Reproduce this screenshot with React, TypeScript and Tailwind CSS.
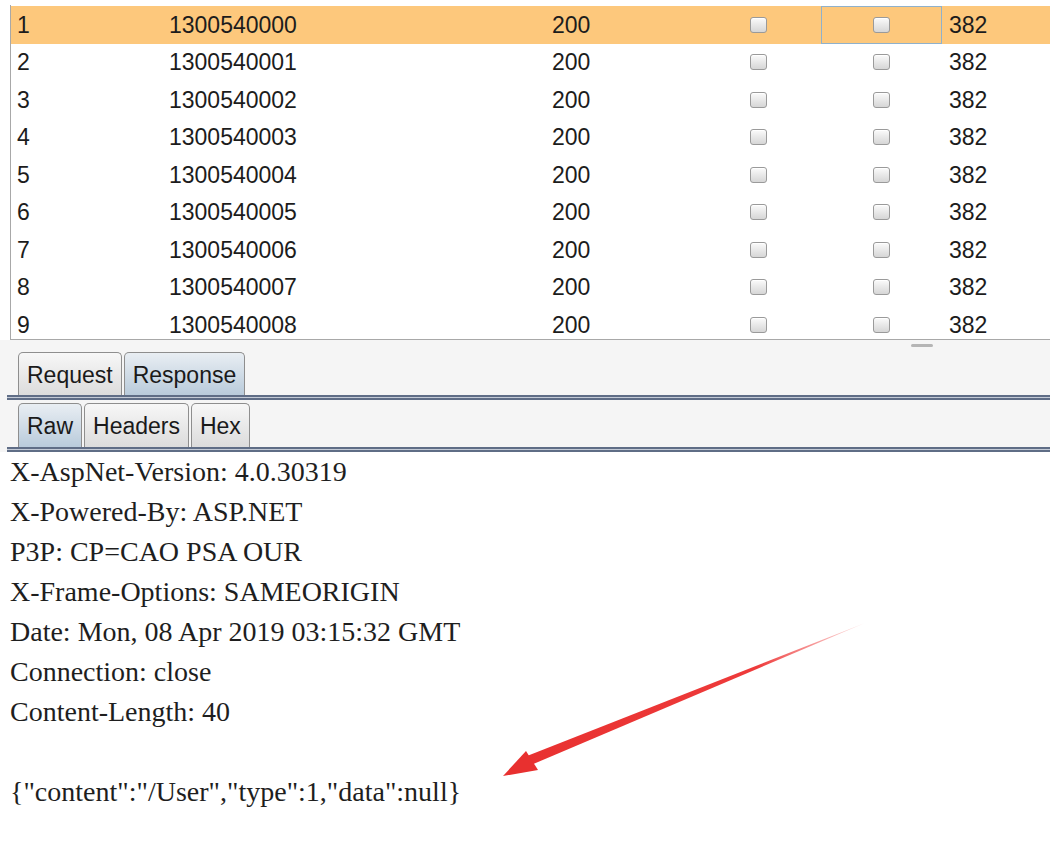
const rows = Array.from({ length: 9 }, (_, i) => ({
  n: i + 1,
  payload: String(1300540000 + i),
}));

const headers = [
  "X-AspNet-Version: 4.0.30319",
  "X-Powered-By: ASP.NET",
  "P3P: CP=CAO PSA OUR",
  "X-Frame-Options: SAMEORIGIN",
  "Date: Mon, 08 Apr 2019 03:15:32 GMT",
  "Connection: close",
  "Content-Length: 40",
];

function Box() {
  return (
    <span className="inline-block h-[16px] w-[17px] rounded-[3px] border border-[#9a9a9a] bg-gradient-to-b from-[#fbfbfb] to-[#d6d6d6] shadow-[inset_0_1px_0_#fff]" />
  );
}

function Tab({ label, active }: { label: string; active?: boolean }) {
  return (
    <div
      className={
        "flex h-full items-center rounded-t-[5px] border border-b-0 border-[#8e8e8e] px-[8px] pt-[2px] text-[23px] text-[#1a1a1a] " +
        (active
          ? "bg-gradient-to-b from-[#e9eef3] to-[#b9cbdb]"
          : "bg-gradient-to-b from-[#f7f7f7] to-[#dcdcdc]")
      }
    >
      {label}
    </div>
  );
}

function Divider() {
  return (
    <div className="ml-[7px] h-[5px] border-y-2 border-[#5f6d86] bg-[#c3cad6]" />
  );
}

export default function App() {
  return (
    <div className="relative h-[854px] w-[1050px] overflow-hidden bg-white font-['Liberation_Sans',Arial,sans-serif]">
      <div className="ml-[10px] mt-[5px] h-[335px] overflow-hidden border-b border-l border-[#a8a8a8] pt-[1px]">
        {rows.map((r) => (
          <div
            key={r.n}
            className={
              "flex h-[37.5px] items-center text-[23px] text-[#1c1c1c] " +
              (r.n === 1 ? "bg-[#fdc87c]" : "")
            }
          >
            <div className="w-[158px] pl-[6px]">{r.n}</div>
            <div className="w-[383px]">{r.payload}</div>
            <div className="w-[198px]">200</div>
            <div className="flex w-[71px] items-center">
              <Box />
            </div>
            <div
              className={
                "flex h-full w-[121px] items-center justify-center " +
                (r.n === 1 ? "border border-[#8fb1cc]" : "border border-transparent")
              }
            >
              <Box />
            </div>
            <div className="pl-[7px]">382</div>
          </div>
        ))}
      </div>

      <div className="relative bg-[#f5f5f5]">
        <div className="absolute left-[911px] top-[4px] h-[3px] w-[22px] rounded bg-[#b5b5b5]" />
        <div className="flex h-[55px] items-end gap-[2px] pl-[18px] pt-[12px]">
          <Tab label="Request" />
          <Tab label="Response" active />
        </div>
        <Divider />
        <div className="flex h-[47px] items-end gap-[2px] pl-[18px] pt-[3px]">
          <Tab label="Raw" active />
          <Tab label="Headers" />
          <Tab label="Hex" />
        </div>
        <Divider />
      </div>

      <div className="pl-[10px] font-['Liberation_Serif','Times_New_Roman',serif] text-[28px] leading-[40px] text-[#1e1e1e]">
        {headers.map((h) => (
          <div key={h}>{h}</div>
        ))}
        <div className="h-[40px]" />
        <div>{'{"content":"/User","type":1,"data":null}'}</div>
      </div>

      <svg
        className="absolute left-0 top-0"
        width="1050"
        height="854"
        viewBox="0 0 1050 854"
      >
        <defs>
          <linearGradient id="ar" x1="865" y1="623" x2="505" y2="775" gradientUnits="userSpaceOnUse">
            <stop offset="0" stopColor="#f04a4a" stopOpacity="0.15" />
            <stop offset="0.3" stopColor="#ee3b3b" />
            <stop offset="1" stopColor="#e8302f" />
          </linearGradient>
        </defs>
        <path d="M865 623 L531 765 L527 756 Z" fill="url(#ar)" />
        <path d="M503 776 L526 751 L538 770 Z" fill="#e8302f" />
      </svg>
    </div>
  );
}
